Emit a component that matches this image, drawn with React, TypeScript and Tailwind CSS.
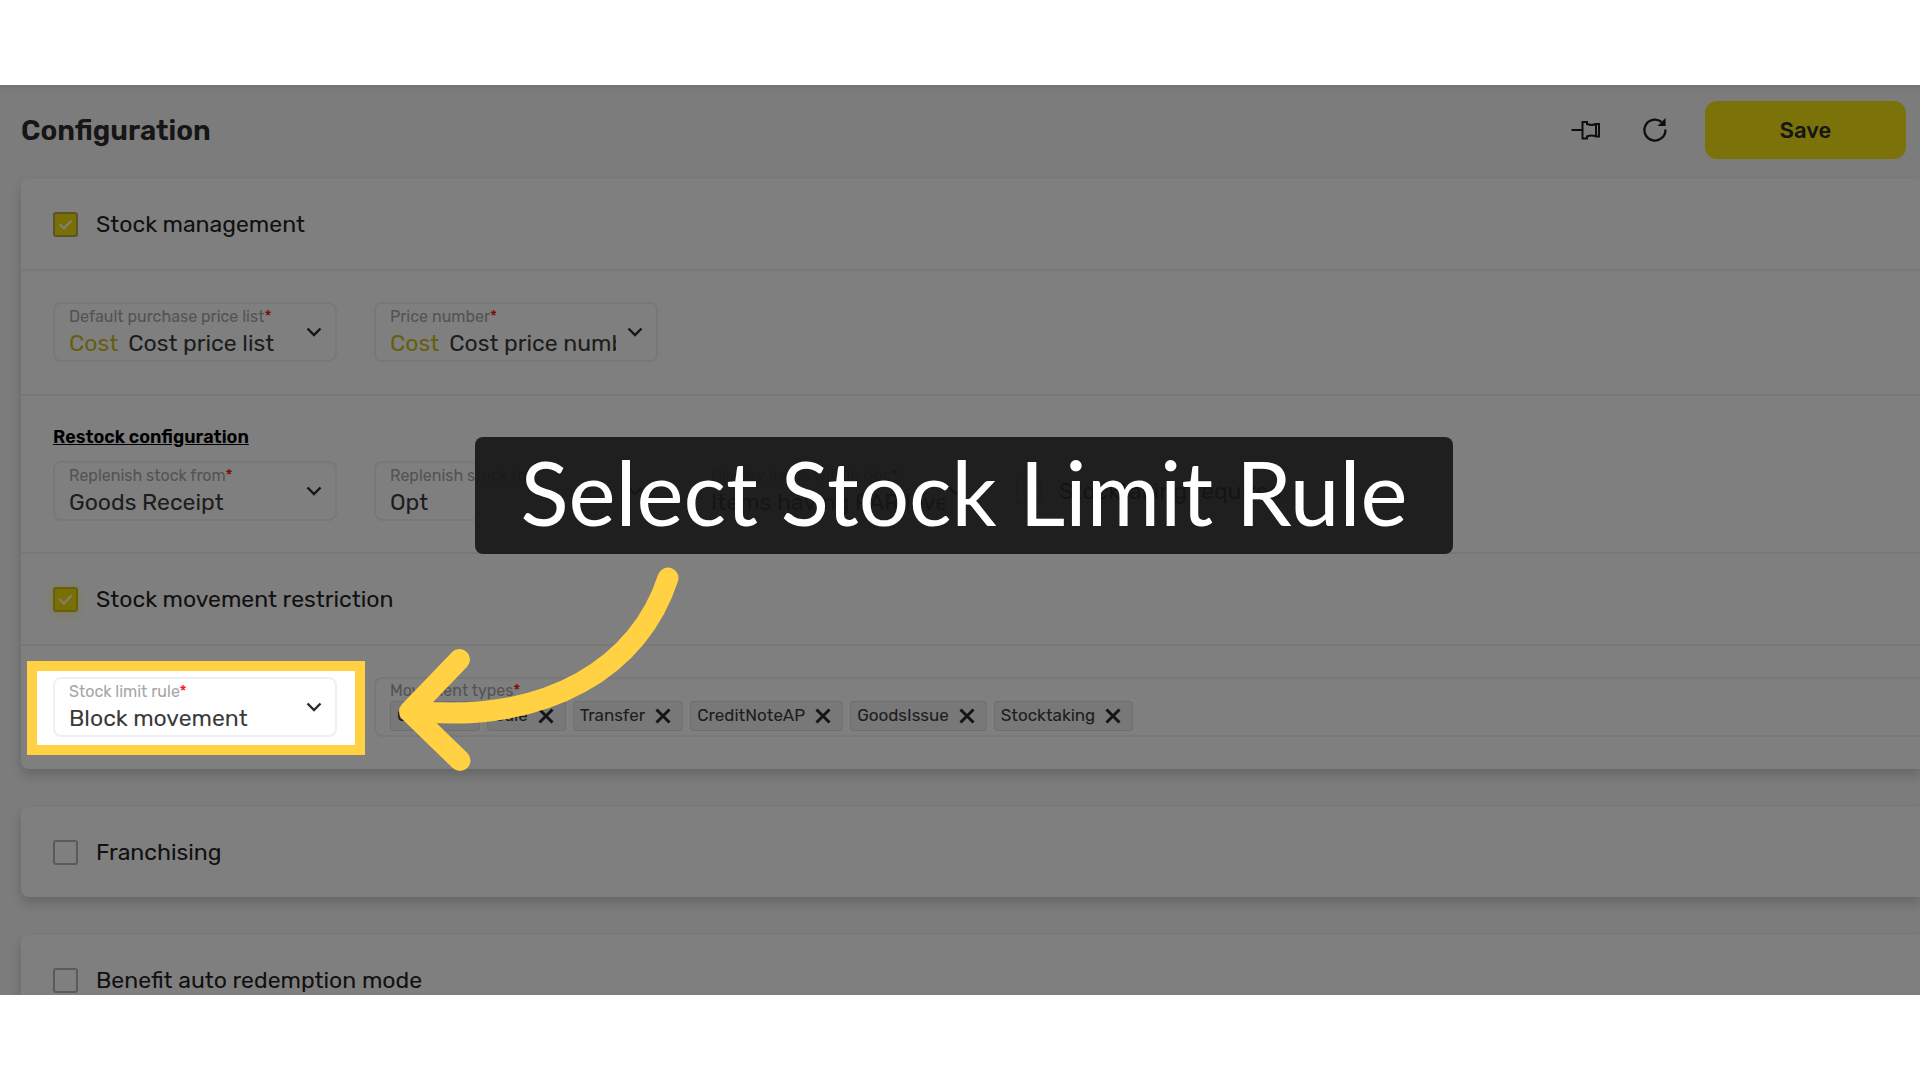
import React, { useId, type ReactNode } from "react";

function Chevron() {
  return (
    <svg className="pointer-events-none absolute top-1/2 right-[13px] h-[10px] w-4 -translate-y-1/2" viewBox="0 0 16 10" fill="none" stroke="#2a2a2a" strokeWidth="2.4">
      <path d="M1.500 1.500 8 8l6.500-6.500" />
    </svg>
  );
}

function Highlight() {
  return (
    <div className="pointer-events-none absolute -top-[18px] -right-[30px] -bottom-5 -left-7 z-10 border-[10px] border-[#ffd143] shadow-[0_0_0_2400px_rgba(0,0,0,0.5)]" />
  );
}

function Caption({ children }: { children: ReactNode }) {
  return (
    <>
      {children}
      <span className="text-[#ff1010]">*</span>
    </>
  );
}

function SelectField({ label, value, prefix, highlighted }: { label: string; value: string; prefix?: string; highlighted?: boolean }) {
  const id = useId();
  return (
    <div className="relative h-[60px] w-[284px] shrink-0 rounded-lg border-2 border-[#f0f0f0] bg-white pt-[2px] pl-[14px]">
      <label htmlFor={id} className="block text-base leading-[22px] whitespace-nowrap text-[#a6a6a6]">
        <Caption>{label}</Caption>
      </label>
      <div className={prefix ? "flex gap-[10px] pr-10 text-[23px] leading-[30px]" : "flex pr-8 text-[23px] leading-[30px]"}>
        {prefix && <span className="text-[#cbbd1c]">{prefix}</span>}
        <select id={id} className="min-w-0 flex-1 appearance-none overflow-hidden bg-transparent text-[#3a3a3a] outline-none">
          <option>{value}</option>
        </select>
      </div>
      <Chevron />
      {highlighted && <Highlight />}
    </div>
  );
}

function Check({ label, checked, glow }: { label: string; checked?: boolean; glow?: boolean }) {
  return (
    <label className="flex items-center gap-[18px] text-[23px] leading-7 whitespace-nowrap text-[#222]">
      <span className="relative flex h-[25px] w-[25px]">
        <input
          type="checkbox"
          defaultChecked={checked}
          className={
            glow
              ? "peer h-[25px] w-[25px] appearance-none rounded-[3px] border-2 border-[#d0c010] bg-white shadow-[0_2px_12px_rgba(246,228,18,0.35)] checked:bg-[#f2de08]"
              : "peer h-[25px] w-[25px] appearance-none rounded-[3px] border-2 border-[#b4b4b4] bg-white checked:border-[#b5ab4c] checked:bg-[#f2de08]"
          }
        />
        <svg className="pointer-events-none absolute inset-0 hidden h-[25px] w-[25px] peer-checked:block" viewBox="0 0 25 25" fill="none" stroke="#fff" strokeWidth="2">
          <path d="m6.500 12 4.500 4.500 7.500-8" />
        </svg>
      </span>
      {label}
    </label>
  );
}

function Tag({ children }: { children: string }) {
  return (
    <li className="flex h-[30px] items-center gap-[10px] rounded-[3px] border border-[#dfdfdf] bg-[#f0f0f0] pr-[11px] pl-[6px] text-[17px] leading-[26px] text-[#3c3c3c]">
      <span className="pb-[2px]">{children}</span>
      <button type="button" aria-label={`Remove ${children}`}>
        <svg className="h-4 w-4" viewBox="0 0 16 16" stroke="#2a2a2a" strokeWidth="3">
          <path d="m1.500 1.500 13 13m0-13-13 13" />
        </svg>
      </button>
    </li>
  );
}

const card = "rounded-l-lg bg-white shadow-[0_6px_12px_rgba(0,0,0,0.18)]";
const divider = "border-b-2 border-[#f0f0f0]";
const movementTypes = ["GRPO", "Sale", "Transfer", "CreditNoteAP", "GoodsIssue", "Stocktaking"];

export default function App() {
  return (
    <div className="flex h-screen flex-col bg-white py-[85px] font-['Rubik',Roboto,sans-serif]">
      <main className="relative min-h-0 flex-1 overflow-hidden bg-[#f8f8f8] pl-[21px] shadow-[inset_0_8px_6px_-6px_rgba(0,0,0,0.1)]">
        <header className="flex h-[94px] items-start pt-4 pr-[14px]">
          <h1 className="flex-1 text-[28px] leading-[60px] font-semibold text-[#2c2c2c]">Configuration</h1>
          <div className="flex h-[58px] items-center">
            <button type="button" aria-label="Pin" className="mr-10">
              <svg className="h-6 w-8" viewBox="0 0 32 24" fill="none" stroke="#1c1c1c" strokeWidth="2">
                <path d="M3.500 12H14M14.500 4H19v2q4.500 1.800 9 0h3v12.500h-3q-4.500-2-9 0v2h-4.500zM28 6v12.500" />
              </svg>
            </button>
            <button type="button" aria-label="Refresh" className="mr-9">
              <svg className="h-7 w-[29px]" viewBox="0 0 29 28" fill="none" stroke="#1c1c1c" strokeWidth="2.300">
                <path d="M25.400 13.500A10.500 10.500 0 1 1 21.500 5.900" />
                <path d="M25 3.500v6h-6z" fill="#1c1c1c" strokeWidth="1.200" />
              </svg>
            </button>
            <button type="button" className="h-[58px] w-[201px] rounded-xl bg-[#f6e412] text-[22px] font-medium text-[#2c2c2c]">
              Save
            </button>
          </div>
        </header>

        <div className="flex flex-col gap-[38px]">
          <section className={card}>
            <div className={`${divider} flex h-[92px] items-center pl-8`}>
              <Check label="Stock management" checked />
            </div>
            <div className={`${divider} flex gap-[37px] pt-[31px] pb-8 pl-8`}>
              <SelectField label="Default purchase price list" prefix="Cost" value="Cost price list" />
              <SelectField label="Price number" prefix="Cost" value="Cost price number" />
            </div>
            <div className={`${divider} pt-[29px] pb-[31px] pl-8`}>
              <h2 className="mb-3 text-lg leading-6 font-semibold text-black underline">Restock configuration</h2>
              <div className="flex items-center gap-[37px]">
                <SelectField label="Replenish stock from" value="Goods Receipt" />
                <SelectField label="Replenish stock to" value="Opt" />
                <SelectField label="Display items within doc" value="Items having PAR level" />
                <Check label="Stocktaking required" />
              </div>
            </div>
            <div className={`${divider} flex h-[92px] items-center pl-8`}>
              <Check label="Stock movement restriction" checked glow />
            </div>
            <div className="flex gap-[37px] pt-[31px] pb-8 pl-8">
              <SelectField label="Stock limit rule" value="Block movement" highlighted />
              <div className="h-[60px] flex-1 rounded-l-lg border-2 border-r-0 border-[#f0f0f0] pl-[14px]">
                <p className="pt-[2px] text-base leading-5 text-[#a6a6a6]">
                  <Caption>Movement types</Caption>
                </p>
                <ul className="flex gap-[7px]">
                  {movementTypes.map((type) => (
                    <Tag key={type}>{type}</Tag>
                  ))}
                </ul>
              </div>
            </div>
          </section>

          <section className={`${card} flex h-[90px] items-center pl-8`}>
            <Check label="Franchising" />
          </section>

          <section className={`${card} flex h-[90px] items-center pl-8`}>
            <Check label="Benefit auto redemption mode" />
          </section>
        </div>

        <div className="absolute top-[352px] left-[475px] z-20 flex h-[117px] w-[978px] items-center justify-center rounded-lg bg-[#151515]/90 pb-2 font-['Lato',sans-serif] text-[89px] leading-none whitespace-nowrap text-white">
          Select Stock Limit Rule
        </div>
        <svg className="pointer-events-none absolute top-[475px] left-[390px] z-20 h-[220px] w-[300px]" viewBox="390 560 300 220" fill="none" stroke="#ffd143" strokeWidth="21" strokeLinecap="round" strokeLinejoin="round">
          <path d="M668 578C640 665 550 725 410 711M459.500 659.500 409.500 711.500 460 760.500" />
        </svg>
      </main>
    </div>
  );
}
